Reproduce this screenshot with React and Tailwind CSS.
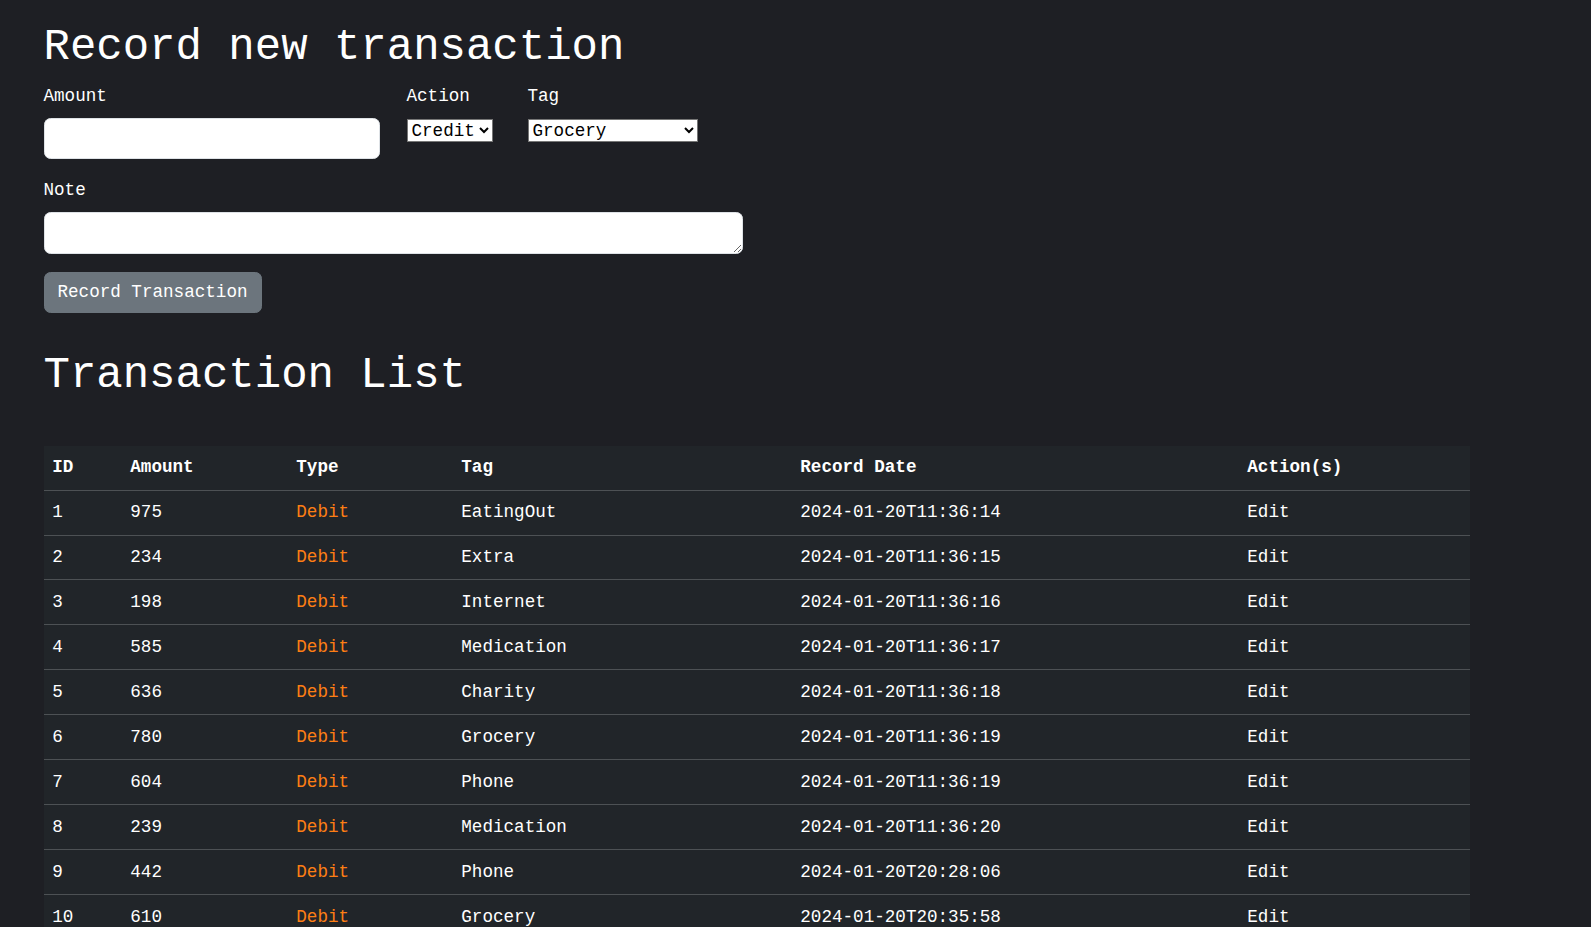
import React, { useState } from 'react';

const transactions = [
  { id: 1, amount: 975, type: 'Debit', tag: 'EatingOut', date: '2024-01-20T11:36:14' },
  { id: 2, amount: 234, type: 'Debit', tag: 'Extra', date: '2024-01-20T11:36:15' },
  { id: 3, amount: 198, type: 'Debit', tag: 'Internet', date: '2024-01-20T11:36:16' },
  { id: 4, amount: 585, type: 'Debit', tag: 'Medication', date: '2024-01-20T11:36:17' },
  { id: 5, amount: 636, type: 'Debit', tag: 'Charity', date: '2024-01-20T11:36:18' },
  { id: 6, amount: 780, type: 'Debit', tag: 'Grocery', date: '2024-01-20T11:36:19' },
  { id: 7, amount: 604, type: 'Debit', tag: 'Phone', date: '2024-01-20T11:36:19' },
  { id: 8, amount: 239, type: 'Debit', tag: 'Medication', date: '2024-01-20T11:36:20' },
  { id: 9, amount: 442, type: 'Debit', tag: 'Phone', date: '2024-01-20T20:28:06' },
  { id: 10, amount: 610, type: 'Debit', tag: 'Grocery', date: '2024-01-20T20:35:58' },
];

const tags = ['Grocery', 'EatingOut', 'Extra', 'Internet', 'Medication', 'Charity', 'Phone'];

const App = () => {
  const [amount, setAmount] = useState('');
  const [action, setAction] = useState('Credit');
  const [tag, setTag] = useState('Grocery');
  const [note, setNote] = useState('');

  return (
    <div className="min-h-screen bg-[#1e1f24] text-white font-['Liberation_Mono',monospace] text-[17.6px] leading-[1.5] px-[43.5px] pt-[21px] pb-10">
      <h1 className="text-[44px] leading-[1.2] mb-[8.8px]">Record new transaction</h1>

      <div className="flex mb-[17.6px]">
        <div className="w-[336px] mr-[27px]">
          <label className="block mb-[8.8px]">Amount</label>
          <input
            type="number"
            value={amount}
            onChange={e => setAmount(e.target.value)}
            className="block w-full h-[41.6px] px-[13px] bg-white text-black border border-[#dee2e6] rounded-[6.6px] outline-none"
          />
        </div>
        <div className="w-[86px] mr-[35px]">
          <label className="block mb-[9.8px]">Action</label>
          <select
            value={action}
            onChange={e => setAction(e.target.value)}
            className="block w-[86px] h-[23px] bg-white text-black border border-[#767676] text-[17.6px] leading-none"
          >
            <option>Credit</option>
            <option>Debit</option>
          </select>
        </div>
        <div>
          <label className="block mb-[9.8px]">Tag</label>
          <select
            value={tag}
            onChange={e => setTag(e.target.value)}
            className="block w-[170px] h-[23px] bg-white text-black border border-[#767676] text-[17.6px] leading-none"
          >
            {tags.map(t => <option key={t}>{t}</option>)}
          </select>
        </div>
      </div>

      <label className="block mb-[8.8px]">Note</label>
      <textarea
        rows={1}
        value={note}
        onChange={e => setNote(e.target.value)}
        className="block w-[699px] h-[41.6px] px-[13px] py-[6px] bg-white text-black border border-[#dee2e6] rounded-[6.6px] outline-none mb-[18.6px]"
      />

      <button className="h-[40.4px] w-[218px] bg-[#6c757d] text-white rounded-[6.6px] border border-[#6c757d]">
        Record Transaction
      </button>

      <h1 className="text-[44px] leading-[1.2] mt-[36px]">Transaction List</h1>

      <table className="mt-[44px] w-[1426px] table-fixed border-collapse bg-[#212529] text-white">
        <thead>
          <tr className="border-b border-[#4d5154] text-left">
            <th className="w-[78px] px-[8.8px] py-[8.8px] font-bold">ID</th>
            <th className="w-[166px] px-[8.8px] py-[8.8px] font-bold">Amount</th>
            <th className="w-[165px] px-[8.8px] py-[8.8px] font-bold">Type</th>
            <th className="w-[339px] px-[8.8px] py-[8.8px] font-bold">Tag</th>
            <th className="w-[447px] px-[8.8px] py-[8.8px] font-bold">Record Date</th>
            <th className="w-[231px] px-[8.8px] py-[8.8px] font-bold">Action(s)</th>
          </tr>
        </thead>
        <tbody>
          {transactions.map(t => (
            <tr key={t.id} className="border-b border-[#4d5154]">
              <td className="px-[8.8px] py-[8.8px]">{t.id}</td>
              <td className="px-[8.8px] py-[8.8px]">{t.amount}</td>
              <td className="px-[8.8px] py-[8.8px] text-[#fd7e14]">{t.type}</td>
              <td className="px-[8.8px] py-[8.8px]">{t.tag}</td>
              <td className="px-[8.8px] py-[8.8px]">{t.date}</td>
              <td className="px-[8.8px] py-[8.8px]">Edit</td>
            </tr>
          ))}
        </tbody>
      </table>
    </div>
  );
};

export default App;
